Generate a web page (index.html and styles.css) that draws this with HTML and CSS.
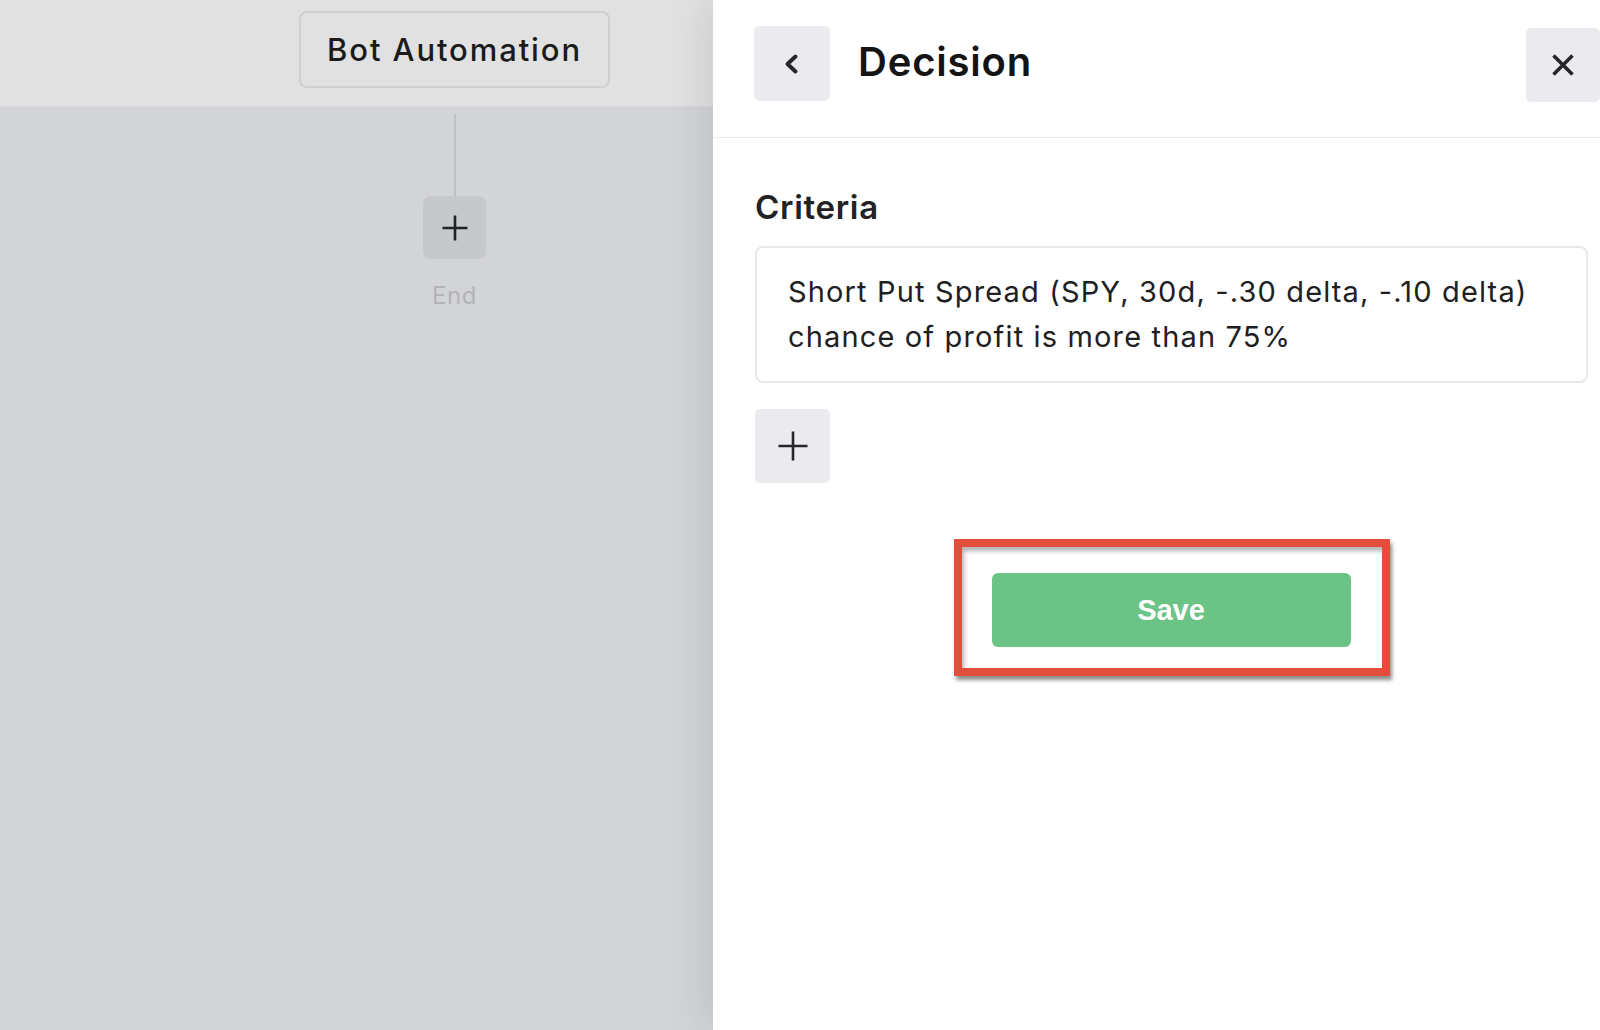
FILE: index.html
```html
<!DOCTYPE html>
<html lang="en">
<head>
<meta charset="utf-8">
<title>Decision</title>
<link rel="stylesheet" href="styles.css">
</head>
<body>
<div class="app">
  <section class="canvas">
    <header class="canvas-head">
      <div class="flow-col">
        <div class="trigger">Bot Automation</div>
      </div>
    </header>
    <div class="canvas-body">
      <div class="flow-col">
        <div class="connector"></div>
        <button class="add-node" type="button" aria-label="Add step">
          <svg width="26" height="26" viewBox="0 0 26 26"><path d="M13 0.5V25.5M0.5 13H25.5" stroke="#202124" stroke-width="2.6" fill="none"/></svg>
        </button>
        <div class="end-label">End</div>
      </div>
    </div>
  </section>

  <aside class="panel">
    <header class="panel-head">
      <button class="icon-btn back-btn" type="button" aria-label="Back">
        <svg width="24" height="24" viewBox="0 0 24 24"><path d="M15.5 4.5L7.5 12L15.5 19.5" stroke="#26272b" stroke-width="4" stroke-linecap="round" stroke-linejoin="round" fill="none"/></svg>
      </button>
      <h1 class="panel-title">Decision</h1>
      <button class="icon-btn close-btn" type="button" aria-label="Close">
        <svg width="28" height="28" viewBox="0 0 28 28"><path d="M4.5 4.5L23.5 23.5M23.5 4.5L4.5 23.5" stroke="#26272b" stroke-width="3.6" fill="none"/></svg>
      </button>
    </header>

    <div class="panel-body">
      <h2 class="section-title">Criteria</h2>
      <div class="criteria-box">Short Put Spread (SPY, 30d, -.30 delta, -.10 delta) chance of profit is more than 75%</div>
      <button class="icon-btn add-criteria" type="button" aria-label="Add criteria">
        <svg width="32" height="32" viewBox="0 0 32 32"><path d="M16 1.5V30.5M1.5 16H30.5" stroke="#26272b" stroke-width="2.6" fill="none"/></svg>
      </button>
      <div class="save-row">
        <div class="highlight">
          <button class="save-btn" type="button">Save</button>
        </div>
      </div>
    </div>
  </aside>
</div>
</body>
</html>
```

FILE: styles.css
```css
* { box-sizing: border-box; }

html, body {
  margin: 0;
  padding: 0;
  height: 100%;
}

body {
  font-family: "Inter", "Noto Sans", sans-serif;
  color: #1d1d1f;
  background: #d3d4d7;
  overflow: hidden;
}

button {
  font-family: inherit;
  border: none;
  padding: 0;
  cursor: pointer;
}

.app {
  display: flex;
  height: 1030px;
  width: 1600px;
}

/* ---------- left canvas ---------- */
.canvas {
  width: 713px;
  flex: 0 0 713px;
  display: flex;
  flex-direction: column;
  background: #d3d4d7;
}

.canvas-head {
  height: 107px;
  background: #e1e1e2;
  border-bottom: 1px solid #d9d9db;
}

.flow-col {
  width: 311px;
  margin-left: 299px;
  display: flex;
  flex-direction: column;
  align-items: center;
}

.trigger {
  margin-top: 11px;
  width: 311px;
  height: 77px;
  border: 2px solid #cfcfd1;
  border-radius: 8px;
  display: flex;
  align-items: center;
  justify-content: center;
  font-size: 31px;
  font-weight: 450;
  color: #1b1b1c;
  letter-spacing: 1.9px;
}

.canvas-body {
  flex: 1;
}

.connector {
  margin-top: 7px;
  width: 2px;
  height: 82px;
  background: #bfc0c3;
}

.add-node {
  width: 63px;
  height: 63px;
  border-radius: 8px;
  background: #c7c8cc;
  display: flex;
  align-items: center;
  justify-content: center;
}

.end-label {
  margin-top: 22px;
  font-size: 24px;
  line-height: 29px;
  color: #b3b4b8;
  letter-spacing: 0.5px;
}

/* ---------- right panel ---------- */
.panel {
  flex: 1;
  background: #ffffff;
  overflow: hidden;
  box-shadow: -6px 0 40px rgba(0, 0, 0, 0.10);
  display: flex;
  flex-direction: column;
}

.panel-head {
  height: 138px;
  border-bottom: 1px solid #ececee;
  display: flex;
  align-items: flex-start;
  padding: 26px 0 0 41px;
}

.icon-btn {
  background: #ebebef;
  border-radius: 5px;
  display: flex;
  align-items: center;
  justify-content: center;
}

.back-btn {
  width: 76px;
  height: 75px;
}

.panel-title {
  margin: 0 0 0 28px;
  font-size: 40px;
  line-height: 71px;
  font-weight: 600;
  color: #141415;
  letter-spacing: 0.8px;
}

.close-btn {
  margin-left: auto;
  margin-top: 2px;
  width: 74px;
  height: 74px;
}

.panel-body {
  padding: 0 12px 0 42px;
  display: flex;
  flex-direction: column;
  align-items: flex-start;
}

.section-title {
  margin: 49px 0 19px;
  font-size: 33px;
  line-height: 40px;
  font-weight: 600;
  color: #222224;
  letter-spacing: 0.7px;
}

.criteria-box {
  align-self: stretch;
  border: 2px solid #e8e8ea;
  border-radius: 8px;
  padding: 21px 31px 22px;
  font-size: 29px;
  line-height: 45px;
  color: #202022;
  letter-spacing: 1.15px;
}

.add-criteria {
  margin-top: 26px;
  width: 75px;
  height: 74px;
}

.save-row {
  align-self: stretch;
  display: flex;
  justify-content: center;
  margin-top: 56px;
}

.highlight {
  width: 436px;
  height: 137px;
  border: 8px solid #e44c3c;
  background: #ffffff;
  padding: 26px 31px 20px 30px;
  box-shadow: 2px 4px 4px rgba(0, 0, 0, 0.45), inset 2px 4px 4px rgba(0, 0, 0, 0.30);
}

.save-btn {
  width: 359px;
  height: 74px;
  border-radius: 6px;
  background: #6bc386;
  color: #ffffff;
  font-family: "Liberation Sans", Arial, sans-serif;
  font-weight: 700;
  font-size: 29px;
}
```
